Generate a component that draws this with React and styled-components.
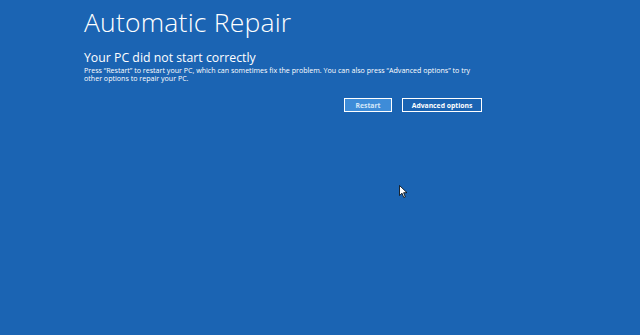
import React from 'react';
import styled, { createGlobalStyle } from 'styled-components';

const Global = createGlobalStyle`
  html, body {
    margin: 0;
    padding: 0;
    background: #1b64b3;
  }
  body {
    width: 640px;
    height: 335px;
    overflow: hidden;
    font-family: "Open Sans", "Noto Sans", sans-serif;
    color: #ffffff;
  }
`;

const Screen = styled.main`
  width: 640px;
  height: 335px;
  background: #1b64b3;
  position: relative;
  padding: 5px 0 0 84px;
  box-sizing: border-box;
`;

const Title = styled.h1`
  margin: 0;
  font-size: 26.5px;
  font-weight: 300;
  letter-spacing: 0.2px;
  line-height: 35px;
`;

const Subtitle = styled.h2`
  margin: 10px 0 0;
  font-size: 12.3px;
  font-weight: 400;
  line-height: 15px;
`;

const Body = styled.p`
  margin: 1px 0 0;
  width: 396px;
  font-size: 7.1px;
  line-height: 8px;
  font-weight: 400;
`;

const Actions = styled.div`
  display: flex;
  gap: 10px;
  margin: 16px 0 0 260px;
`;

const Button = styled.button`
  box-sizing: border-box;
  height: 14px;
  width: ${p => p.$w}px;
  padding: 0;
  border: 1.5px solid #ffffff;
  background: ${p => (p.$primary ? '#3e8cd8' : '#1b64b3')};
  color: ${p => (p.$primary ? '#d6e8f8' : '#ffffff')};
  font-family: "Open Sans", "Noto Sans", sans-serif;
  font-size: 6.8px;
  font-weight: 700;
  line-height: 11px;
  cursor: default;
`;

const Cursor = styled.svg`
  position: absolute;
  left: 399px;
  top: 185px;
`;

export default function App() {
  return (
    <Screen>
      <Global />
      <Title>Automatic Repair</Title>
      <Subtitle>Your PC did not start correctly</Subtitle>
      <Body>
        Press “Restart” to restart your PC, which can sometimes fix the problem. You can also press “Advanced options” to try
        other options to repair your PC.
      </Body>
      <Actions>
        <Button $primary $w={48}>Restart</Button>
        <Button $w={80}>Advanced options</Button>
      </Actions>
      <Cursor width="10" height="14" viewBox="0 0 10 14">
        <path d="M0.5 0.5 L0.5 10.5 L3 8.2 L4.8 12.5 L6.3 11.9 L4.6 7.7 L8 7.7 Z" fill="#ffffff" stroke="#000000" strokeWidth="0.8" strokeLinejoin="round" />
      </Cursor>
    </Screen>
  );
}
